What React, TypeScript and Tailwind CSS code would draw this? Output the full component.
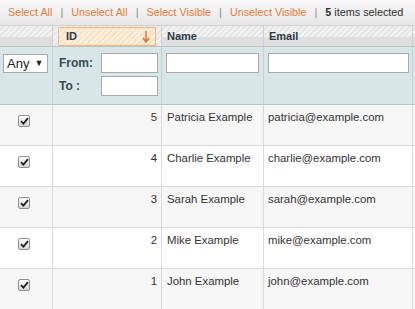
import React from "react";

const rows = [
  { id: 5, name: "Patricia Example", email: "patricia@example.com" },
  { id: 4, name: "Charlie Example", email: "charlie@example.com" },
  { id: 3, name: "Sarah Example", email: "sarah@example.com" },
  { id: 2, name: "Mike Example", email: "mike@example.com" },
  { id: 1, name: "John Example", email: "john@example.com" },
];

function Check() {
  return (
    <div className="w-[12px] h-[12px] rounded-[2px] border border-[#8f8f8f] bg-[linear-gradient(#fdfdfd,#d6d6d6)] flex items-center justify-center">
      <svg width="9" height="8" viewBox="0 0 9 8">
        <path d="M1 4.2 L3.4 6.6 L8 1.2" fill="none" stroke="#222" strokeWidth="1.8" />
      </svg>
    </div>
  );
}

const stripes =
  "bg-[repeating-linear-gradient(135deg,#f3f3f3_0px,#f3f3f3_2px,#e6e6e6_2px,#e6e6e6_4px)]";

export default function App() {
  return (
    <div className="w-[415px] h-[309px] overflow-hidden bg-white text-[11.4px] text-[#333]" style={{ fontFamily: '"Liberation Sans", Arial, sans-serif' }}>
      {/* mass action bar */}
      <div className="h-[26px] bg-[linear-gradient(#f9f9f9,#e6e6e6)] flex items-center pl-[8px] text-[10.8px] border-b border-[#d0d0d0]">
        <span className="text-[#ea7a3a]">Select All</span>
        <span className="text-[#888] mx-[8px]">|</span>
        <span className="text-[#ea7a3a]">Unselect All</span>
        <span className="text-[#888] mx-[8px]">|</span>
        <span className="text-[#ea7a3a]">Select Visible</span>
        <span className="text-[#888] mx-[8px]">|</span>
        <span className="text-[#ea7a3a]">Unselect Visible</span>
        <span className="text-[#888] mx-[8px]">|</span>
        <span className="text-[#2f2f2f]"><strong className="font-bold">5</strong> items selected</span>
      </div>

      <div className="grid grid-cols-[53px_109px_102px_149px_1fr]">
        {/* header */}
        <div className={`h-[21px] border-r border-[#cfcfcf] border-b border-b-[#c2c2c2] ${stripes} relative`}>
          <div className="absolute left-0 right-0 bottom-0 h-[9px] bg-[#dedede]" />
        </div>
        <div className={`h-[21px] border-r border-[#cfcfcf] border-b border-b-[#c2c2c2] ${stripes} relative px-[5px] py-[1px]`}>
          <div className="h-[19px] border border-[#f0b483] bg-[repeating-linear-gradient(135deg,#fff1e0_0px,#fff1e0_2px,#fbe0c4_2px,#fbe0c4_4px)] flex items-center justify-between pl-[7px] pr-[5px]">
            <span className="text-[11px] font-bold text-[#2d3b45]">ID</span>
            <svg width="8" height="12" viewBox="0 0 8 12">
              <path d="M4 0 V10 M1 7 L4 11 L7 7" fill="none" stroke="#eb6a1c" strokeWidth="1.4" />
            </svg>
          </div>
        </div>
        <div className={`h-[21px] border-r border-[#cfcfcf] border-b border-b-[#c2c2c2] ${stripes} relative`}>
          <div className="absolute left-0 right-0 bottom-0 h-[9px] bg-[#dedede]" />
          <span className="relative pl-[5px] text-[11px] font-bold text-[#2d3b45] leading-[20px]">Name</span>
        </div>
        <div className={`h-[21px] border-r border-[#cfcfcf] border-b border-b-[#c2c2c2] ${stripes} relative`}>
          <div className="absolute left-0 right-0 bottom-0 h-[9px] bg-[#dedede]" />
          <span className="relative pl-[5px] text-[11px] font-bold text-[#2d3b45] leading-[20px]">Email</span>
        </div>
        <div className={`h-[21px] border-b border-b-[#c2c2c2] ${stripes} relative`}>
          <div className="absolute left-0 right-0 bottom-0 h-[9px] bg-[#dedede]" />
        </div>

        {/* filter row */}
        <div className="h-[58px] bg-[#d9e6e7] border-r border-[#c6d2d4] border-b border-b-[#b9c6c8] pt-[7px] pl-[3px]">
          <div className="w-[45px] h-[19px] bg-white border border-[#aaa] flex items-center pl-[3px] text-[13px] text-[#222]">
            Any<span className="text-[9px] ml-[5px]">▼</span>
          </div>
        </div>
        <div className="h-[58px] bg-[#d9e6e7] border-r border-[#c6d2d4] border-b border-b-[#b9c6c8] pt-[6px] pl-[6px] flex flex-col gap-[3px]">
          <div className="flex items-center">
            <span className="w-[42px] text-[12px] font-bold text-[#3a4a50]">From:</span>
            <div className="w-[57px] h-[20px] bg-white border border-[#aaa]" />
          </div>
          <div className="flex items-center">
            <span className="w-[42px] text-[12px] font-bold text-[#3a4a50]">To :</span>
            <div className="w-[57px] h-[20px] bg-white border border-[#aaa]" />
          </div>
        </div>
        <div className="h-[58px] bg-[#d9e6e7] border-r border-[#c6d2d4] border-b border-b-[#b9c6c8] pt-[6px] pl-[4px]">
          <div className="w-[93px] h-[20px] bg-white border border-[#aaa]" />
        </div>
        <div className="h-[58px] bg-[#d9e6e7] border-r border-[#c6d2d4] border-b border-b-[#b9c6c8] pt-[6px] pl-[4px]">
          <div className="w-[141px] h-[20px] bg-white border border-[#aaa]" />
        </div>
        <div className="h-[58px] bg-[#d9e6e7] border-b border-b-[#b9c6c8]" />

        {/* data rows */}
        {rows.map((r, i) => {
          const bg = i % 2 === 0 ? "bg-[#f6f6f6]" : "bg-white";
          const cell = `h-[41px] ${bg} border-b border-b-[#dadada]`;
          return (
            <React.Fragment key={r.id}>
              <div className={`${cell} border-r border-r-[#dadada] flex justify-start pl-[18px] pt-[10px]`}>
                <Check />
              </div>
              <div className={`${cell} border-r border-r-[#dadada] text-right pr-[4px] pt-[4px]`}>{r.id}</div>
              <div className={`${cell} border-r border-r-[#dadada] pl-[5px] pt-[4px]`}>{r.name}</div>
              <div className={`${cell} border-r border-r-[#dadada] pl-[4px] pt-[4px]`}>{r.email}</div>
              <div className={cell} />
            </React.Fragment>
          );
        })}
      </div>
    </div>
  );
}
